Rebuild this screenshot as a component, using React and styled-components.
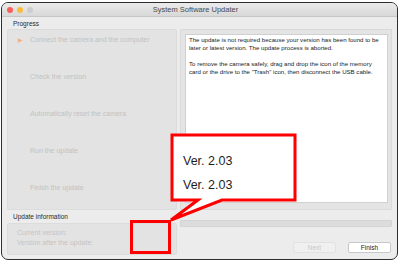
import React from "react";
import styled, { createGlobalStyle } from "styled-components";

const GlobalStyle = createGlobalStyle`
  html, body {
    margin: 0;
    padding: 0;
    background: #ffffff;
  }
  body {
    font-family: "Liberation Sans", Arial, sans-serif;
  }
`;

const steps = [
  "Connect the camera and the computer",
  "Check the version",
  "Automatically reset the camera",
  "Run the update",
  "Finish the update",
];

const Page = styled.div`
  position: relative;
  width: 400px;
  height: 264px;
  padding: 2px 0 0 1px;
  box-sizing: border-box;
`;

const Window = styled.div`
  width: 397px;
  height: 258px;
  box-sizing: border-box;
  border: 1px solid #2e2e2e;
  border-radius: 7px;
  overflow: hidden;
  background: #ececec;
  display: flex;
  flex-direction: column;
`;

const TitleBar = styled.div`
  height: 14px;
  flex: none;
  display: flex;
  align-items: center;
  position: relative;
  background: linear-gradient(#ebebeb, #d8d8d8);
  border-bottom: 1px solid #c6c6c6;
  box-sizing: border-box;
  padding-left: 5px;
  gap: 4px;
`;

const Light = styled.span`
  width: 6px;
  height: 6px;
  border-radius: 50%;
  background: ${(p) => p.color};
`;

const Title = styled.div`
  position: absolute;
  left: 0;
  right: 0;
  text-align: center;
  font-size: 7.5px;
  color: #4a4a4a;
  padding-right: 8px;
`;

const Content = styled.div`
  flex: 1;
  padding: 2px 5px 0 5px;
  display: flex;
  flex-direction: column;
`;

const SectionLabel = styled.div`
  font-size: 6.5px;
  color: #2a2a2a;
  height: 9px;
  line-height: 9px;
  padding-left: 6px;
  margin-bottom: ${(p) => p.gap || 1}px;
`;

const MainRow = styled.div`
  display: flex;
  gap: 3px;
  height: 181px;
`;

const ProgressPanel = styled.div`
  width: 170px;
  box-sizing: border-box;
  background: #e3e3e3;
  border: 1px solid #dcdcdc;
  border-radius: 2px;
  padding: 4px 0 0 10px;
  display: flex;
  flex-direction: column;
  gap: 27px;
`;

const Step = styled.div`
  height: 10px;
  display: flex;
  align-items: center;
  font-size: 7px;
  color: #c2c2c2;
`;

const Marker = styled.span`
  width: 12px;
  font-size: 6px;
  color: ${(p) => (p.active ? "#f3b27a" : "transparent")};
`;

const MessageFrame = styled.div`
  flex: 1;
  box-sizing: border-box;
  background: #e4e4e4;
  border: 1px solid #dadada;
  padding: 4px 3px 6px 4px;
  display: flex;
`;

const MessageBox = styled.div`
  flex: 1;
  background: #ffffff;
  border: 1px solid #d0d0d0;
  padding: 1px 3px;
  font-size: 6.1px;
  line-height: 8px;
  color: #222;
`;

const Para = styled.p`
  margin: 0 0 8px 0;
`;

const LowerRow = styled.div`
  display: flex;
  gap: 3px;
  margin-top: 2px;
`;

const InfoColumn = styled.div`
  width: 170px;
  display: flex;
  flex-direction: column;
`;

const InfoPanel = styled.div`
  height: 32px;
  box-sizing: border-box;
  background: #e3e3e3;
  border: 1px solid #dcdcdc;
  border-radius: 2px;
  padding: 5px 0 0 9px;
  display: flex;
  flex-direction: column;
  gap: 3px;
  font-size: 7px;
  color: #c4c4c4;
`;

const ActionColumn = styled.div`
  flex: 1;
  display: flex;
  flex-direction: column;
  padding-top: 8px;
`;

const ProgressBar = styled.div`
  height: 7px;
  background: #dcdcdc;
  border: 1px solid #d4d4d4;
  border-radius: 1px;
  box-sizing: border-box;
`;

const Buttons = styled.div`
  display: flex;
  justify-content: flex-end;
  gap: 12px;
  margin-top: 15px;
  padding-right: 1px;
`;

const Button = styled.div`
  width: 43px;
  height: 11px;
  box-sizing: border-box;
  border-radius: 2px;
  display: flex;
  align-items: center;
  justify-content: center;
  font-size: 6.5px;
  background: ${(p) => (p.disabled ? "#f0f0f0" : "#ffffff")};
  color: ${(p) => (p.disabled ? "#c8c8c8" : "#222")};
  border: 1px solid ${(p) => (p.disabled ? "#e2e2e2" : "#c8c8c8")};
`;

const Overlay = styled.svg`
  position: absolute;
  left: 0;
  top: 0;
  pointer-events: none;
`;

const CalloutText = styled.div`
  position: absolute;
  left: 183px;
  top: 149px;
  font-size: 12.5px;
  line-height: 24px;
  color: #1e1e1e;
`;

export default function App() {
  return (
    <Page>
      <GlobalStyle />
      <Window>
        <TitleBar>
          <Light color="#fb5f57" />
          <Light color="#fcbb3d" />
          <Light color="#cdcdcd" />
          <Title>System Software Updater</Title>
        </TitleBar>
        <Content>
          <SectionLabel>Progress</SectionLabel>
          <MainRow>
            <ProgressPanel>
              {steps.map((s, i) => (
                <Step key={s}>
                  <Marker active={i === 0}>▶</Marker>
                  {s}
                </Step>
              ))}
            </ProgressPanel>
            <MessageFrame>
              <MessageBox>
                <Para>
                  The update is not required because your version has been found to be later or latest version. The update process is aborted.
                </Para>
                <Para>
                  To remove the camera safely, drag and drop the icon of the memory card or the drive to the "Trash" icon, then disconnect the USB cable.
                </Para>
              </MessageBox>
            </MessageFrame>
          </MainRow>
          <LowerRow>
            <InfoColumn>
              <SectionLabel gap={2}>Update information</SectionLabel>
              <InfoPanel>
                <div>Current version:</div>
                <div>Version after the update:</div>
              </InfoPanel>
            </InfoColumn>
            <ActionColumn>
              <ProgressBar />
              <Buttons>
                <Button disabled>Next</Button>
                <Button>Finish</Button>
              </Buttons>
            </ActionColumn>
          </LowerRow>
        </Content>
      </Window>
      <Overlay width="400" height="264" viewBox="0 0 400 264">
        <path
          d="M172 135 H295 V200 H222 L171 220 L198 200 H172 Z"
          fill="#ffffff"
          stroke="#ff0000"
          strokeWidth="3"
          strokeLinejoin="miter"
        />
        <rect x="131.5" y="221.5" width="38" height="31" fill="none" stroke="#ff0000" strokeWidth="3" />
      </Overlay>
      <CalloutText>
        <div>Ver. 2.03</div>
        <div>Ver. 2.03</div>
      </CalloutText>
    </Page>
  );
}
